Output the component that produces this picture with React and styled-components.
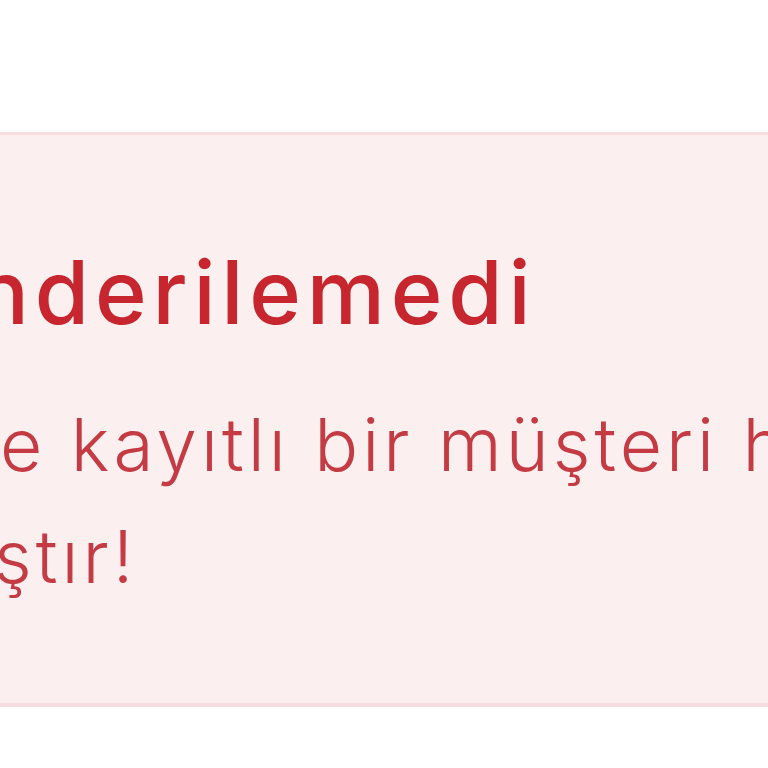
import React from 'react';
import styled, { createGlobalStyle } from 'styled-components';

const GlobalStyle = createGlobalStyle`
    html, body {
        margin: 0;
        padding: 0;
        background: #ffffff;
        overflow: hidden;
    }
`

class App extends React.Component {
    render() {
        return (
            <Page>
                <GlobalStyle/>
                <Alert role="alert">
                    <AlertTitle>nderilemedi</AlertTitle>
                    <AlertText>
                        <AlertLine>e kayıtlı bir müşteri h</AlertLine>
                        <AlertLine indent={-6}>ştır!</AlertLine>
                    </AlertText>
                </Alert>
            </Page>
        );
    }
}

const Page = styled.div`
    width: 768px;
    height: 768px;
    padding-top: 132px;
    box-sizing: border-box;
    overflow: hidden;
    font-family: Inter, "Noto Sans", sans-serif;
`

const Alert = styled.div`
    background: #fcefef;
    border-top: 3px solid #f6dde0;
    border-bottom: 4px solid #f3dde0;
    padding: 113px 0 90px 0;
`

const AlertTitle = styled.h2`
    margin: 0;
    font-size: 88px;
    line-height: 1;
    font-weight: 500;
    letter-spacing: 5.8px;
    color: #c8262e;
    white-space: nowrap;
    text-indent: -24px;
`

const AlertText = styled.div`
    margin-top: 53px;
    font-size: 73px;
    line-height: 112px;
    font-weight: 300;
    letter-spacing: 4px;
    color: #c43b44;
`

const AlertLine = styled.div`
    white-space: nowrap;
    text-indent: ${p => p.indent || 0}px;
`

export default App;
